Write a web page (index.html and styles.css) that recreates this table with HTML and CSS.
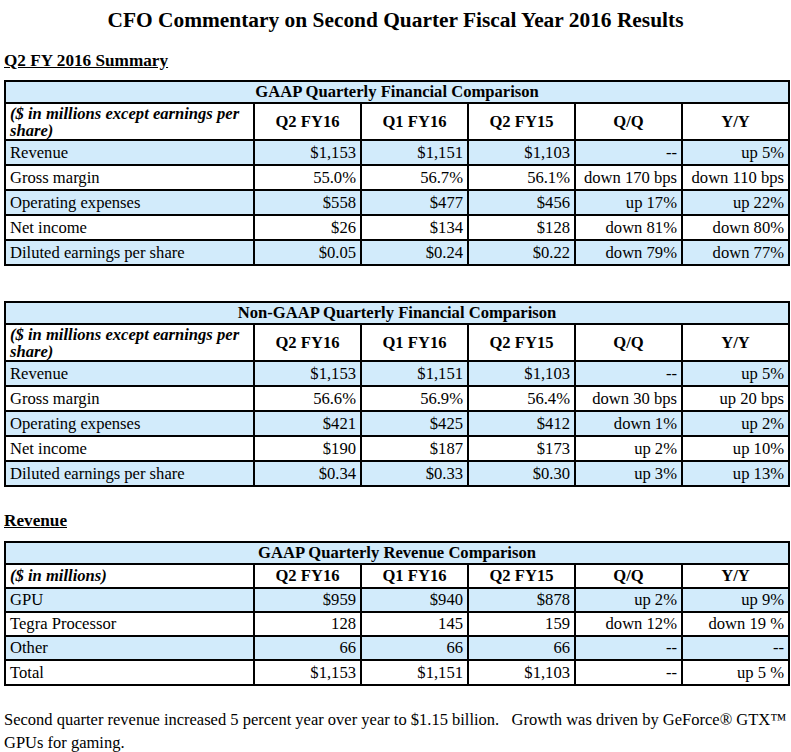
FILE: index.html
```html
<!DOCTYPE html>
<html>
<head>
<meta charset="utf-8">
<link rel="stylesheet" href="styles.css">
</head>
<body>
<h1 class="title">CFO Commentary on Second Quarter Fiscal Year 2016 Results</h1>
<h2 class="section section-first">Q2 FY 2016 Summary</h2>
<table class="fin">
  <colgroup><col class="c-label"><col><col><col><col><col></colgroup>
  <tr class="blue caption"><td colspan="6">GAAP Quarterly Financial Comparison</td></tr>
  <tr class="colhead tall"><td class="unit">($ in millions except earnings per share)</td><td>Q2 FY16</td><td>Q1 FY16</td><td>Q2 FY15</td><td>Q/Q</td><td>Y/Y</td></tr>
  <tr class="blue"><td>Revenue</td><td>$1,153</td><td>$1,151</td><td>$1,103</td><td>--</td><td>up 5%</td></tr>
  <tr><td>Gross margin</td><td>55.0%</td><td>56.7%</td><td>56.1%</td><td>down 170 bps</td><td>down 110 bps</td></tr>
  <tr class="blue"><td>Operating expenses</td><td>$558</td><td>$477</td><td>$456</td><td>up 17%</td><td>up 22%</td></tr>
  <tr><td>Net income</td><td>$26</td><td>$134</td><td>$128</td><td>down 81%</td><td>down 80%</td></tr>
  <tr class="blue"><td>Diluted earnings per share</td><td>$0.05</td><td>$0.24</td><td>$0.22</td><td>down 79%</td><td>down 77%</td></tr>
</table>

<table class="fin second">
  <colgroup><col class="c-label"><col><col><col><col><col></colgroup>
  <tr class="blue caption"><td colspan="6">Non-GAAP Quarterly Financial Comparison</td></tr>
  <tr class="colhead tall"><td class="unit">($ in millions except earnings per share)</td><td>Q2 FY16</td><td>Q1 FY16</td><td>Q2 FY15</td><td>Q/Q</td><td>Y/Y</td></tr>
  <tr class="blue"><td>Revenue</td><td>$1,153</td><td>$1,151</td><td>$1,103</td><td>--</td><td>up 5%</td></tr>
  <tr><td>Gross margin</td><td>56.6%</td><td>56.9%</td><td>56.4%</td><td>down 30 bps</td><td>up 20 bps</td></tr>
  <tr class="blue"><td>Operating expenses</td><td>$421</td><td>$425</td><td>$412</td><td>down 1%</td><td>up 2%</td></tr>
  <tr><td>Net income</td><td>$190</td><td>$187</td><td>$173</td><td>up 2%</td><td>up 10%</td></tr>
  <tr class="blue"><td>Diluted earnings per share</td><td>$0.34</td><td>$0.33</td><td>$0.30</td><td>up 3%</td><td>up 13%</td></tr>
</table>

<h2 class="section section-rev">Revenue</h2>
<table class="fin rev">
  <colgroup><col class="c-label"><col><col><col><col><col></colgroup>
  <tr class="blue caption"><td colspan="6">GAAP Quarterly Revenue Comparison</td></tr>
  <tr class="colhead"><td class="unit">($ in millions)</td><td>Q2 FY16</td><td>Q1 FY16</td><td>Q2 FY15</td><td>Q/Q</td><td>Y/Y</td></tr>
  <tr class="blue"><td>GPU</td><td>$959</td><td>$940</td><td>$878</td><td>up 2%</td><td>up 9%</td></tr>
  <tr><td>Tegra Processor</td><td>128</td><td>145</td><td>159</td><td>down 12%</td><td>down 19 %</td></tr>
  <tr class="blue"><td>Other</td><td>66</td><td>66</td><td>66</td><td>--</td><td>--</td></tr>
  <tr><td>Total</td><td>$1,153</td><td>$1,151</td><td>$1,103</td><td>--</td><td>up 5 %</td></tr>
</table>

<p class="body-text">Second quarter revenue increased 5 percent year over year to $1.15 billion.&nbsp;&nbsp; Growth was driven by GeForce® GTX™ GPUs for gaming.</p>
</body>
</html>
```

FILE: styles.css
```css
html, body {
  margin: 0;
  padding: 0;
  background: #ffffff;
}
body {
  padding: 0 4px;
  font-family: "Liberation Serif", "Times New Roman", serif;
  font-size: 16.6px;
  color: #000;
}
.title {
  margin: 0;
  padding-top: 7px;
  height: 40px;
  font-size: 21.4px;
  line-height: 26px;
  font-weight: bold;
  text-align: center;
}
.section {
  margin: 0;
  font-size: 17.2px;
  line-height: 20px;
  font-weight: bold;
  text-decoration: underline;
}
.section-first {
  padding-top: 4px;
  height: 33px;
  box-sizing: border-box;
}
.section-rev {
  margin-top: 24px;
  height: 30px;
}
.fin {
  width: 783px;
  border-collapse: collapse;
  table-layout: fixed;
  border: 2px solid #000;
}
.fin col { width: 107px; }
.fin col.c-label { width: 249px; }
.fin td {
  border: 2px solid #000;
  padding: 0 4px;
  height: 23px;
  line-height: 20px;
  text-align: right;
  vertical-align: middle;
  white-space: nowrap;
}
.fin.rev td { height: 22.3px; }
.fin td:first-child { text-align: left; }
.fin tr.blue td { background: #d2ebfb; }
.fin .caption td,
.fin.rev .caption td {
  text-align: center;
  font-weight: bold;
  height: 20px;
}
.fin .colhead td,
.fin.rev .colhead td {
  text-align: center;
  font-weight: bold;
  height: 21.5px;
}
.fin .colhead td.unit {
  text-align: left;
  font-style: italic;
  white-space: normal;
}
.fin .colhead.tall td {
  height: 35px;
  line-height: 17px;
}
.second { margin-top: 35px; }
.body-text {
  margin: 22px 0 0;
  font-size: 16.5px;
  line-height: 23px;
}
```
